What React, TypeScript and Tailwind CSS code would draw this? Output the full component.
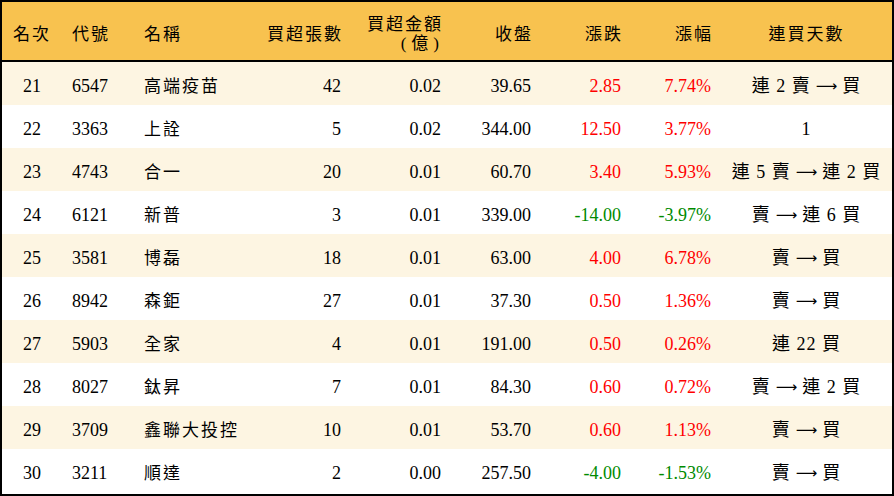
import React from 'react';

type Row = {
  rank: number;
  code: string;
  name: string;
  lots: number;
  amount: string;
  close: string;
  change: string;
  pct: string;
  streak: string[];
};

// streak parts are joined with a wide arrow
const rows: Row[] = [
  { rank: 21, code: '6547', name: '高端疫苗', lots: 42, amount: '0.02', close: '39.65', change: '2.85', pct: '7.74%', streak: ['連 2 賣', '買'] },
  { rank: 22, code: '3363', name: '上詮', lots: 5, amount: '0.02', close: '344.00', change: '12.50', pct: '3.77%', streak: ['1'] },
  { rank: 23, code: '4743', name: '合一', lots: 20, amount: '0.01', close: '60.70', change: '3.40', pct: '5.93%', streak: ['連 5 賣', '連 2 買'] },
  { rank: 24, code: '6121', name: '新普', lots: 3, amount: '0.01', close: '339.00', change: '-14.00', pct: '-3.97%', streak: ['賣', '連 6 買'] },
  { rank: 25, code: '3581', name: '博磊', lots: 18, amount: '0.01', close: '63.00', change: '4.00', pct: '6.78%', streak: ['賣', '買'] },
  { rank: 26, code: '8942', name: '森鉅', lots: 27, amount: '0.01', close: '37.30', change: '0.50', pct: '1.36%', streak: ['賣', '買'] },
  { rank: 27, code: '5903', name: '全家', lots: 4, amount: '0.01', close: '191.00', change: '0.50', pct: '0.26%', streak: ['連 22 買'] },
  { rank: 28, code: '8027', name: '鈦昇', lots: 7, amount: '0.01', close: '84.30', change: '0.60', pct: '0.72%', streak: ['賣', '連 2 買'] },
  { rank: 29, code: '3709', name: '鑫聯大投控', lots: 10, amount: '0.01', close: '53.70', change: '0.60', pct: '1.13%', streak: ['賣', '買'] },
  { rank: 30, code: '3211', name: '順達', lots: 2, amount: '0.00', close: '257.50', change: '-4.00', pct: '-1.53%', streak: ['賣', '買'] },
];

const cols = 'grid grid-cols-[60px_72px_118px_99px_100px_90px_90px_90px_1fr]';
const cjk = 'text-[17px] tracking-[2px]';

const Streak: React.FC<{ parts: string[] }> = ({ parts }) => (
  <div className="flex justify-center items-center whitespace-pre">
    {parts.map((p, i) => (
      <React.Fragment key={i}>
        {i > 0 && <span className="font-['DejaVu_Sans',sans-serif] text-[15px] mx-[5px]">⟶</span>}
        <span className="tracking-[1px]">{p}</span>
      </React.Fragment>
    ))}
  </div>
);

const App: React.FC = () => {
  return (
    <div className="w-[894px] h-[496px] bg-white font-['Liberation_Serif','Noto_Sans_CJK_TC',serif] text-[18px] text-black">
      <div className="border-2 border-black h-full flex flex-col">
        {/* header */}
        <div className={`${cols} h-[60px] pt-[6px] bg-[#f8c24f] border-b-2 border-black items-center ${cjk} leading-[19px]`}>
          <div className="text-center">名次</div>
          <div className="pl-[10px]">代號</div>
          <div className="pl-[10px]">名稱</div>
          <div className="text-right pr-[8px]">買超張數</div>
          <div className="text-right pr-[8px]">
            <div>買超金額</div>
            <div className="flex justify-end gap-[3px] pr-[2px]">
              <span>(</span>
              <span>億</span>
              <span>)</span>
            </div>
          </div>
          <div className="text-right pr-[8px]">收盤</div>
          <div className="text-right pr-[8px]">漲跌</div>
          <div className="text-right pr-[8px]">漲幅</div>
          <div className="text-center">連買天數</div>
        </div>

        {rows.map((r, i) => {
          const down = r.change.startsWith('-');
          const color = down ? 'text-[#008a00]' : 'text-[#ff0000]';
          return (
            <div
              key={r.rank}
              className={`${cols} h-[43px] pt-[6px] items-center ${i % 2 === 0 ? 'bg-[#fdf5e2]' : 'bg-white'}`}
            >
              <div className="text-center">{r.rank}</div>
              <div className="pl-[10px]">{r.code}</div>
              <div className={`pl-[10px] ${cjk}`}>{r.name}</div>
              <div className="text-right pr-[10px]">{r.lots}</div>
              <div className="text-right pr-[10px]">{r.amount}</div>
              <div className="text-right pr-[10px]">{r.close}</div>
              <div className={`text-right pr-[10px] ${color}`}>{r.change}</div>
              <div className={`text-right pr-[10px] ${color}`}>{r.pct}</div>
              <Streak parts={r.streak} />
            </div>
          );
        })}
      </div>
    </div>
  );
};

export default App;
